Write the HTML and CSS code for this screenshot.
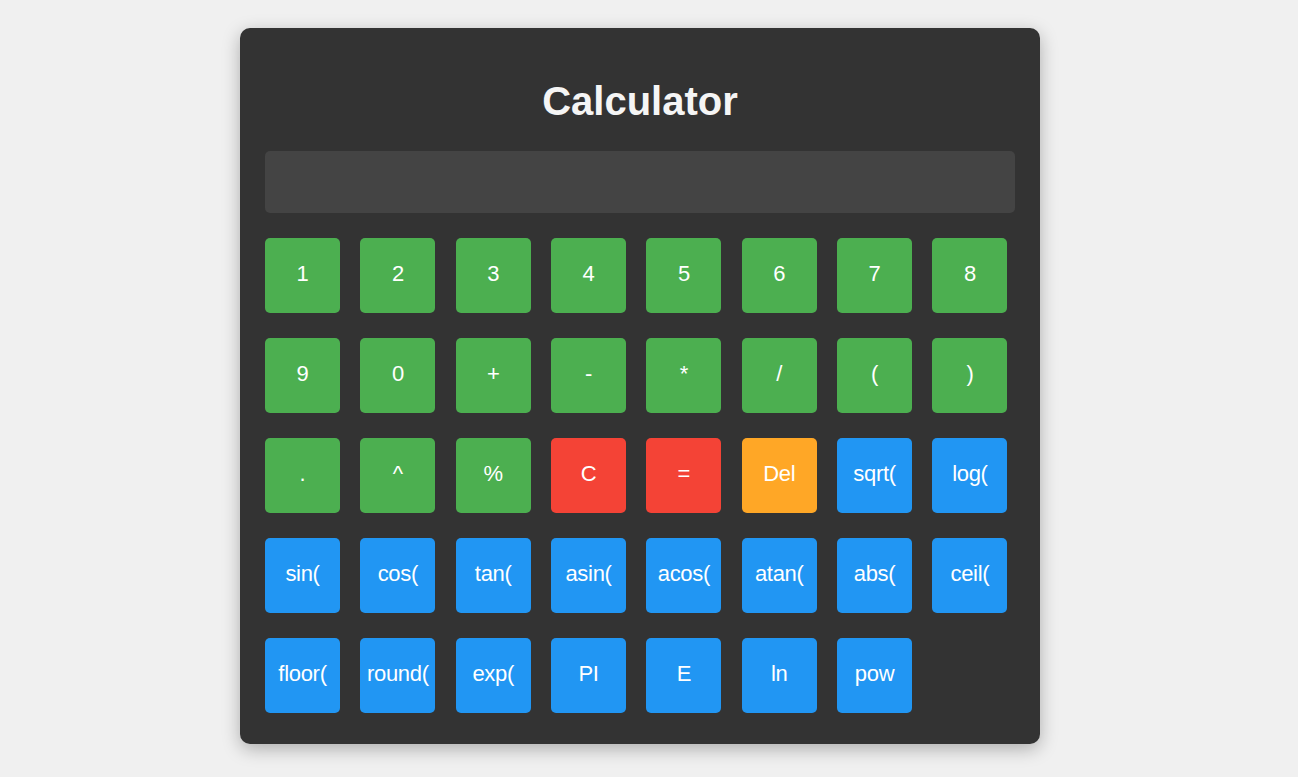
FILE: index.html
```html
<!DOCTYPE html>
<html>
<head>
<meta charset="utf-8">
<title>Calculator</title>
<link rel="stylesheet" href="styles.css">
</head>
<body>
<div class="calculator">
  <h1 class="title">Calculator</h1>
  <div class="display"></div>
  <div class="keys">
    <button class="key num">1</button>
    <button class="key num">2</button>
    <button class="key num">3</button>
    <button class="key num">4</button>
    <button class="key num">5</button>
    <button class="key num">6</button>
    <button class="key num">7</button>
    <button class="key num">8</button>
    <button class="key num">9</button>
    <button class="key num">0</button>
    <button class="key num">+</button>
    <button class="key num">-</button>
    <button class="key num">*</button>
    <button class="key num">/</button>
    <button class="key num">(</button>
    <button class="key num">)</button>
    <button class="key num">.</button>
    <button class="key num">^</button>
    <button class="key num">%</button>
    <button class="key red">C</button>
    <button class="key red">=</button>
    <button class="key orange">Del</button>
    <button class="key fn">sqrt(</button>
    <button class="key fn">log(</button>
    <button class="key fn">sin(</button>
    <button class="key fn">cos(</button>
    <button class="key fn">tan(</button>
    <button class="key fn">asin(</button>
    <button class="key fn">acos(</button>
    <button class="key fn">atan(</button>
    <button class="key fn">abs(</button>
    <button class="key fn">ceil(</button>
    <button class="key fn">floor(</button>
    <button class="key fn">round(</button>
    <button class="key fn">exp(</button>
    <button class="key fn">PI</button>
    <button class="key fn">E</button>
    <button class="key fn">ln</button>
    <button class="key fn">pow</button>
  </div>
</div>
</body>
</html>
```
FILE: styles.css
```css
html, body {
  margin: 0;
  padding: 0;
  background: #f0f0f0;
  font-family: "Liberation Sans", Arial, sans-serif;
}

body {
  min-height: 100vh;
  padding-top: 28px;
  box-sizing: border-box;
}

.calculator {
  box-sizing: border-box;
  width: 800px;
  margin: 0 0 0 240px;
  padding: 25px 25px 31px;
  background: #333333;
  border-radius: 10px;
  box-shadow: 0 5px 18px rgba(0, 0, 0, 0.28);
}

.title {
  margin: 25px 0 27px;
  font-size: 40px;
  font-weight: bold;
  line-height: 46px;
  text-align: center;
  color: #f5f5f5;
}

.display {
  height: 62px;
  background: #444444;
  border-radius: 5px;
  margin-bottom: 25px;
}

.keys {
  display: grid;
  grid-template-columns: repeat(8, 75px);
  grid-auto-rows: 75px;
  column-gap: 20.35px;
  row-gap: 25px;
}

.key {
  width: 75px;
  height: 75px;
  padding: 0 0 3px;
  border: none;
  border-radius: 5px;
  color: #ffffff;
  font-family: "Liberation Sans", Arial, sans-serif;
  font-size: 22px;
  letter-spacing: -0.3px;
  cursor: pointer;
}

.num { background: #4caf50; }
.red { background: #f44336; }
.orange { background: #ffa726; }
.fn { background: #2196f3; }
```
